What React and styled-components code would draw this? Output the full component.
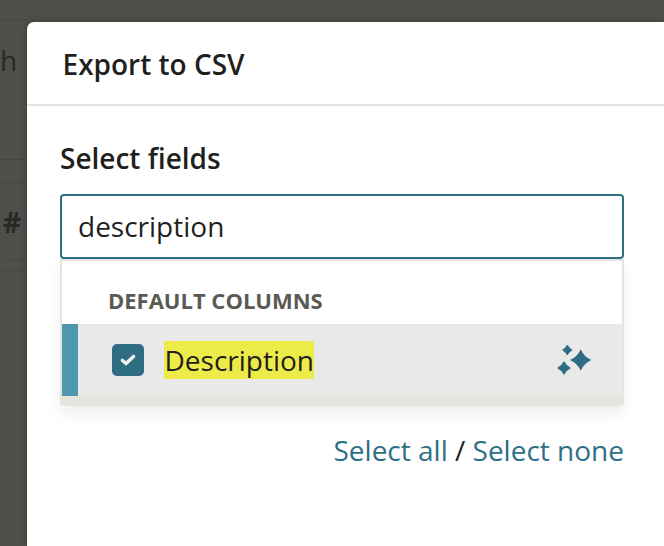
import React from 'react';
import styled, { createGlobalStyle } from 'styled-components';

const Global = createGlobalStyle`
  html, body { margin: 0; padding: 0; background: #4f4e4a; }
  * { box-sizing: border-box; }
`;

const Page = styled.div`
  width: 664px;
  height: 546px;
  display: flex;
  overflow: hidden;
  background: #4f4e4a;
  font-family: "Open Sans", sans-serif;
  color: #1f1f1d;
`;

const Backdrop = styled.div`
  width: 27px;
  flex: none;
  display: flex;
  flex-direction: column;
`;

const BackRow = styled.div`
  height: ${p => p.$h}px;
  flex: none;
  display: flex;
  align-items: center;
  overflow: hidden;
  border-bottom: 1px solid ${p => (p.$plain ? 'transparent' : '#474642')};
  color: #282826;
  font-size: ${p => p.$size || 24}px;
  font-weight: ${p => p.$weight || 400};
  margin-left: ${p => p.$pad || 0}px;
`;

const Modal = styled.div`
  flex: 1;
  margin-top: 22px;
  background: #fff;
  border-top-left-radius: 7px;
  box-shadow: 0 0 6px rgba(0, 0, 0, 0.25);
`;

const Header = styled.div`
  height: 84px;
  padding: 2px 0 0 35.5px;
  display: flex;
  align-items: center;
  border-bottom: 2px solid #e5e4df;
  font-size: 28px;
  font-weight: 600;
`;

const Body = styled.div`
  padding: 33px 40px 0 33px;
`;

const Label = styled.div`
  font-size: 28px;
  font-weight: 600;
  line-height: 38px;
  margin-bottom: 17px;
`;

const Search = styled.div`
  height: 65px;
  border: 2px solid #2f6f85;
  border-radius: 4px;
  padding: 0 0 2px 16px;
  display: flex;
  align-items: center;
  font-size: 28px;
`;

const Dropdown = styled.div`
  height: 147px;
  border: 2px solid #e5e4df;
  border-bottom-width: 0;
  border-radius: 0 0 3px 3px;
  box-shadow: 0 8px 16px rgba(0, 0, 0, 0.07);
  display: flex;
  flex-direction: column;
`;

const GroupTitle = styled.div`
  height: 63px;
  flex: none;
  padding: 26px 0 0 46px;
  font-size: 22px;
  line-height: 27px;
  font-weight: 700;
  color: #5b5a54;
`;

const Option = styled.div`
  height: 72px;
  flex: none;
  display: flex;
  align-items: center;
  background: #e9e9ea;
  border-left: 16px solid #4f97ae;
  padding: 0 29px 0 34px;
`;

const Check = styled.div`
  width: 32px;
  height: 32px;
  flex: none;
  border-radius: 5px;
  background: #2f6d83;
  display: flex;
  align-items: center;
  justify-content: center;
`;

const Mark = styled.mark`
  margin-left: 20px;
  height: 38px;
  line-height: 38px;
  padding-left: 0.5px;
  background: #edeb47;
  color: #1f1f1d;
  font-size: 28px;
`;

const Sparkle = styled.svg`
  margin-left: auto;
  width: 36px;
  height: 32px;
  flex: none;
  fill: #2f6d83;
  stroke: #2f6d83;
  stroke-width: 1.2;
  stroke-linejoin: round;
`;

const Foot = styled.div`
  flex: 1;
  background: #e5e4df;
  border-radius: 0 0 3px 3px;
`;

const Actions = styled.div`
  margin-top: 25px;
  text-align: right;
  font-size: 28px;
  line-height: 38px;
  color: #1f1f1d;
`;

const ActionLink = styled.a`
  color: #2f6f85;
  text-decoration: none;
`;

const star = (cx, cy, r, c) =>
  `M${cx} ${cy - r}Q${cx + c} ${cy - c} ${cx + r} ${cy}Q${cx + c} ${cy + c} ${cx} ${cy + r}Q${cx - c} ${cy + c} ${cx - r} ${cy}Q${cx - c} ${cy - c} ${cx} ${cy - r}Z`;

export default function App() {
  return (
    <Page>
      <Global />
      <Backdrop>
        <BackRow $h={20} />
        <BackRow $h={80} $size={28} $plain>h</BackRow>
        <BackRow $h={60} />
        <BackRow $h={23} />
        <BackRow $h={78} $size={28} $weight={700} $pad={3}>#</BackRow>
        <BackRow $h={10} />
      </Backdrop>
      <Modal>
        <Header>Export to CSV</Header>
        <Body>
          <Label>Select fields</Label>
          <Search>description</Search>
          <Dropdown>
            <GroupTitle>DEFAULT COLUMNS</GroupTitle>
            <Option>
              <Check>
                <svg width="18" height="14" viewBox="0 0 18 14">
                  <path d="M3.5 7.5l3.5 3 7.5-7" fill="none" stroke="#eef1f2" strokeWidth="3.6" strokeLinecap="round" strokeLinejoin="round" />
                </svg>
              </Check>
              <Mark>Description</Mark>
              <Sparkle viewBox="0 0 36 32">
                <path d={star(23.7, 16, 9.6, 3)} />
                <path d={star(10.3, 6, 4.4, 1.6)} />
                <path d={star(7, 24, 6, 2)} />
              </Sparkle>
            </Option>
            <Foot />
          </Dropdown>
          <Actions>
            <ActionLink href="#">Select all</ActionLink> / <ActionLink href="#">Select none</ActionLink>
          </Actions>
        </Body>
      </Modal>
    </Page>
  );
}
